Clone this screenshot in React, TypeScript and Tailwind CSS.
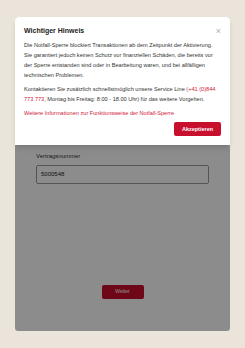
import React from 'react';

const App: React.FC = () => {
  return (
    <div
      className="w-[245px] h-[348px] bg-[#ebe4da] px-[15px] pt-[17px] overflow-hidden"
      style={{ fontFamily: '"Liberation Sans", Arial, sans-serif' }}
    >
      <div className="relative h-[314px] rounded-[3px] bg-white">
        {/* form behind the dialog */}
        <div className="flex flex-col px-[21px] pt-[135px]">
          <label className="text-[6px] text-[#333]">Vertragsnummer</label>
          <div className="mt-[4px] h-[19px] rounded-[2px] border border-[#999] flex items-center px-[4px] text-[6px] text-[#222]">
            5000548
          </div>
          <div className="flex justify-center mt-[101px]">
            <button className="w-[42px] h-[14px] rounded-[2px] bg-[#c8102e] text-white text-[5px]">
              Weiter
            </button>
          </div>
        </div>

        {/* overlay */}
        <div className="absolute inset-0 rounded-[3px] bg-black/45" />

        {/* dialog */}
        <div className="absolute top-0 left-0 right-0 bg-white rounded-t-[3px] shadow-md px-[9px] pt-[9px] pb-[9px]">
          <div className="flex items-start justify-between">
            <h2 className="text-[7px] font-bold text-[#222] leading-[10px]">Wichtiger Hinweis</h2>
            <span className="text-[#aaa] text-[9px] leading-[10px]">×</span>
          </div>
          <p className="mt-[4px] text-[5.6px] leading-[10px] text-[#333]">
            Die Notfall-Sperre blockiert Transaktionen ab dem Zeitpunkt der Aktivierung. Sie garantiert jedoch keinen Schutz vor finanziellen Schäden, die bereits vor der Sperre entstanden sind oder in Bearbeitung waren, und bei allfälligen technischen Problemen.
          </p>
          <p className="mt-[4px] text-[5.6px] leading-[10px] text-[#333]">
            Kontaktieren Sie zusätzlich schnellstmöglich unsere Service Line{' '}
            <span className="text-[#d0203a]">(+41 (0)844 773 773</span>, Montag bis Freitag: 8:00 - 18.00 Uhr) für das weitere Vorgehen.
          </p>
          <p className="mt-[4px] text-[5.6px] leading-[10px] text-[#d0203a]">
            Weitere Informationen zur Funktionsweise der Notfall-Sperre
          </p>
          <div className="flex justify-end mt-[4px]">
            <button className="w-[47px] h-[14px] rounded-[2px] bg-[#c8102e] text-white text-[5.5px] font-bold">
              Akzeptieren
            </button>
          </div>
        </div>
      </div>
    </div>
  );
};

export default App;
